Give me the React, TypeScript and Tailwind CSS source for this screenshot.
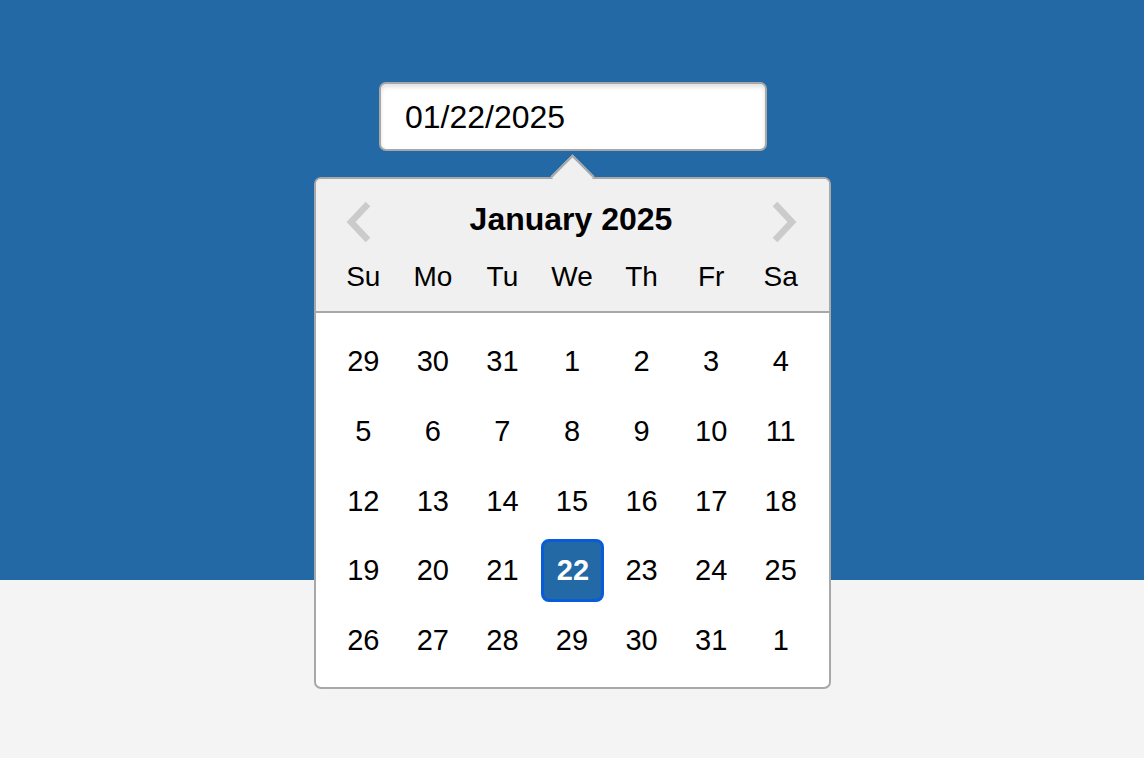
import React from "react";

const WEEKDAYS = ["Su", "Mo", "Tu", "We", "Th", "Fr", "Sa"];

const DAYS: { d: number; muted?: boolean }[] = [
  { d: 29, muted: true }, { d: 30, muted: true }, { d: 31, muted: true },
  ...Array.from({ length: 31 }, (_, i) => ({ d: i + 1 })),
  { d: 1, muted: true },
];

function Chevron({ dir }: { dir: "left" | "right" }) {
  return (
    <svg width="30" height="44" viewBox="0 0 30 44" fill="none">
      <path
        d={dir === "left" ? "M25 4 L8 22 L25 40" : "M5 4 L22 22 L5 40"}
        stroke="#cbcbcb"
        strokeWidth="6.5"
        strokeLinecap="butt"
        strokeLinejoin="miter"
      />
    </svg>
  );
}

export default function App() {
  return (
    <div
      className="min-h-[758px] w-full flex flex-col items-center pt-[82px] bg-[linear-gradient(to_bottom,#2269a5_580px,#f4f4f4_580px)]"
      style={{ fontFamily: '"Liberation Sans", Arial, Helvetica, sans-serif' }}
    >
      {/* date input */}
      <div className="w-[388px] h-[69px] bg-white border-2 border-[#a8a8a8] rounded-[7px] shadow-[inset_0_3px_4px_rgba(0,0,0,0.12)] flex items-center pl-[24px] ml-[2px]">
        <span className="text-[32px] text-black leading-none">01/22/2025</span>
      </div>

      {/* calendar popup */}
      <div className="relative mt-[26px] w-[517px] h-[512px] border-2 border-[#a8a8a8] rounded-[7px] bg-white">
        {/* pointer */}
        <div className="absolute left-[241px] top-[-18px] w-[31px] h-[31px] rotate-45 bg-[#f0f0f0] border-t-2 border-l-2 border-[#a8a8a8] z-10" />

        <div className="rounded-t-[5px] bg-[#f0f0f0] border-b-2 border-[#a8a8a8] pb-[17px] px-[13px]">
          <div className="relative z-20 h-[80px] flex items-center justify-between pl-[14px] pr-[16px]">
            <button className="flex items-center justify-center mt-[6px]">
              <Chevron dir="left" />
            </button>
            <span className="text-[32px] font-bold text-black leading-none">January 2025</span>
            <button className="flex items-center justify-center mt-[6px]">
              <Chevron dir="right" />
            </button>
          </div>
          <div className="grid grid-cols-7 h-[35px] items-center pt-[1px]">
            {WEEKDAYS.map((w) => (
              <div key={w} className="text-center text-[28px] leading-none text-black">
                {w}
              </div>
            ))}
          </div>
        </div>

        <div className="grid grid-cols-7 px-[13px] pt-[14px]">
          {DAYS.map((day, i) => {
            const selected = !day.muted && day.d === 22;
            return (
              <div key={i} className="h-[69.7px] flex items-center justify-center">
                {selected ? (
                  <div className="w-[63px] h-[63px] rounded-[8px] border-[3px] border-[#0a5bd8] bg-[#2269a5] flex items-center justify-center translate-x-[1px]">
                    <span className="text-[29px] font-bold text-white leading-none">{day.d}</span>
                  </div>
                ) : (
                  <span className="text-[29px] text-black leading-none">{day.d}</span>
                )}
              </div>
            );
          })}
        </div>
      </div>
    </div>
  );
}
